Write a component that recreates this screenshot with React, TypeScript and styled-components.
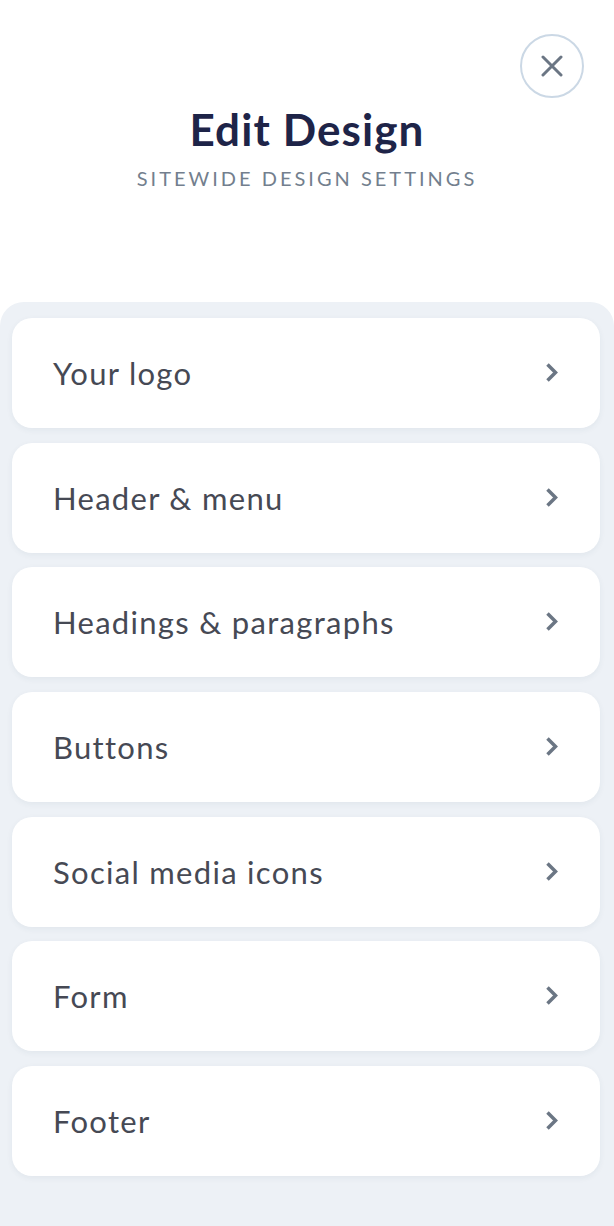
import React from "react";
import styled, { createGlobalStyle } from "styled-components";

const GlobalStyle = createGlobalStyle`
  html, body { margin: 0; padding: 0; background: #ffffff; }
  body { font-family: Lato, "Noto Sans", sans-serif; -webkit-font-smoothing: antialiased; }
  * { box-sizing: border-box; }
`;

const Page = styled.div`
  width: 614px;
  min-height: 1226px;
  display: flex;
  flex-direction: column;
  background: #ffffff;
`;

const Header = styled.header`
  position: relative;
  height: 302px;
  display: flex;
  flex-direction: column;
  align-items: center;
  padding-top: 102px;
`;

const CloseButton = styled.button`
  position: absolute;
  top: 34px;
  right: 30px;
  width: 64px;
  height: 64px;
  border-radius: 50%;
  border: 2px solid #cbd8e5;
  background: #ffffff;
  display: flex;
  align-items: center;
  justify-content: center;
  padding: 0;
  cursor: pointer;
`;

const Title = styled.h1`
  margin: 0;
  font-family: Lato, sans-serif;
  font-weight: 700;
  font-size: 44px;
  line-height: 54px;
  color: #1e2448;
  letter-spacing: 1.1px;
`;

const Subtitle = styled.p`
  margin: 10px 0 0;
  font-family: Lato, sans-serif;
  font-weight: 400;
  font-size: 20px;
  line-height: 24px;
  letter-spacing: 3px;
  color: #737f8e;
  text-transform: uppercase;
`;

const Panel = styled.section`
  flex: 1;
  background: #edf1f6;
  border-radius: 24px 24px 0 0;
  padding: 16px 14px 50px 12px;
  display: flex;
  flex-direction: column;
  gap: 14.67px;
`;

const Card = styled.button`
  height: 110px;
  width: 100%;
  background: #ffffff;
  border: none;
  border-radius: 20px;
  box-shadow: 0 2px 6px rgba(40, 60, 90, 0.06);
  display: flex;
  align-items: center;
  justify-content: space-between;
  padding: 0 41px 0 41px;
  cursor: pointer;
  text-align: left;
`;

const Label = styled.span`
  font-family: Lato, sans-serif;
  font-size: 31px;
  font-weight: 400;
  color: #464954;
  letter-spacing: 1.3px;
`;

const Chevron = () => (
  <svg width="14" height="22" viewBox="0 0 14 22" fill="none">
    <path d="M2.5 2.5 L10.5 10.5 L2.5 18.5" stroke="#6b7684" strokeWidth="3.5" strokeLinecap="butt" strokeLinejoin="miter" />
  </svg>
);

const CloseIcon = () => (
  <svg width="22" height="22" viewBox="0 0 22 22" fill="none">
    <path d="M2 2 L20 20 M20 2 L2 20" stroke="#6b7684" strokeWidth="3" strokeLinecap="round" />
  </svg>
);

const items = [
  "Your logo",
  "Header & menu",
  "Headings & paragraphs",
  "Buttons",
  "Social media icons",
  "Form",
  "Footer",
];

export default function App() {
  return (
    <Page>
      <GlobalStyle />
      <Header>
        <CloseButton aria-label="Close">
          <CloseIcon />
        </CloseButton>
        <Title>Edit Design</Title>
        <Subtitle>Sitewide design settings</Subtitle>
      </Header>
      <Panel>
        {items.map((item) => (
          <Card key={item}>
            <Label>{item}</Label>
            <Chevron />
          </Card>
        ))}
      </Panel>
    </Page>
  );
}
